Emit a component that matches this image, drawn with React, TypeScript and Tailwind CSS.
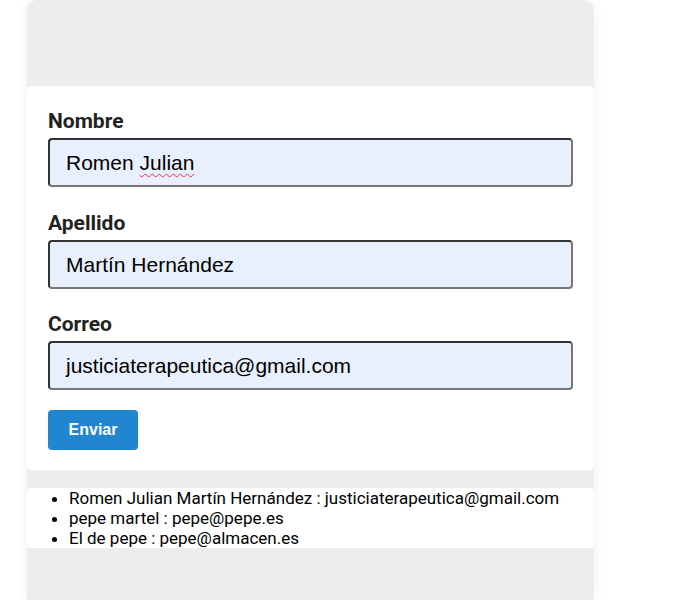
import React from 'react'

const fields = [
  { label: 'Nombre', value: 'Romen Julian', gap: 'mt-0' },
  { label: 'Apellido', value: 'Martín Hernández', gap: 'mt-[21px]' },
  { label: 'Correo', value: 'justiciaterapeutica@gmail.com', gap: 'mt-[20px]' },
]

const people = [
  'Romen Julian Martín Hernández : justiciaterapeutica@gmail.com',
  'pepe martel : pepe@pepe.es',
  'El de pepe : pepe@almacen.es',
]

const App = () => {
  return (
    <div className="min-h-[600px] bg-white font-['Roboto',sans-serif]">
      <div className="ml-[27px] w-[567px] min-h-[600px] bg-[#ededed] rounded-t-[10px] shadow-[0_0_12px_rgba(0,0,0,0.06)] pt-[86px]">
        <form className="bg-white rounded-[4px] px-[21px] pt-[20px] pb-[20px] flex flex-col">
          {fields.map((f) => (
            <div key={f.label} className={f.gap}>
              <label className="block text-[21px] font-bold text-[#222] leading-[31px] mb-[1px]">{f.label}</label>
              <div className="h-[49px] w-[525px] rounded-[4px] border-2 border-t-[#333] border-l-[#333] border-r-[#767676] border-b-[#767676] bg-[#e8f0fe] flex items-center pl-[16px] font-['Liberation_Sans',Arial,sans-serif] text-[21px] text-black">
                {f.label === 'Nombre' ? (
                  <span>
                    Romen <span className="underline decoration-wavy decoration-red-500 decoration-1 underline-offset-[3px]">Julian</span>
                  </span>
                ) : (
                  f.value
                )}
              </div>
            </div>
          ))}
          <button
            type="button"
            className="mt-[20px] w-[90px] h-[40px] rounded-[4px] bg-[#2185d0] text-white font-bold text-[16px] font-['Liberation_Sans',Arial,sans-serif]"
          >
            Enviar
          </button>
        </form>
        <ul className="mt-[18px] bg-white rounded-[4px] list-disc pl-[42px] text-[17px] leading-[20px] text-black">
          {people.map((p) => (
            <li key={p}>{p}</li>
          ))}
        </ul>
      </div>
    </div>
  )
}

export default App
